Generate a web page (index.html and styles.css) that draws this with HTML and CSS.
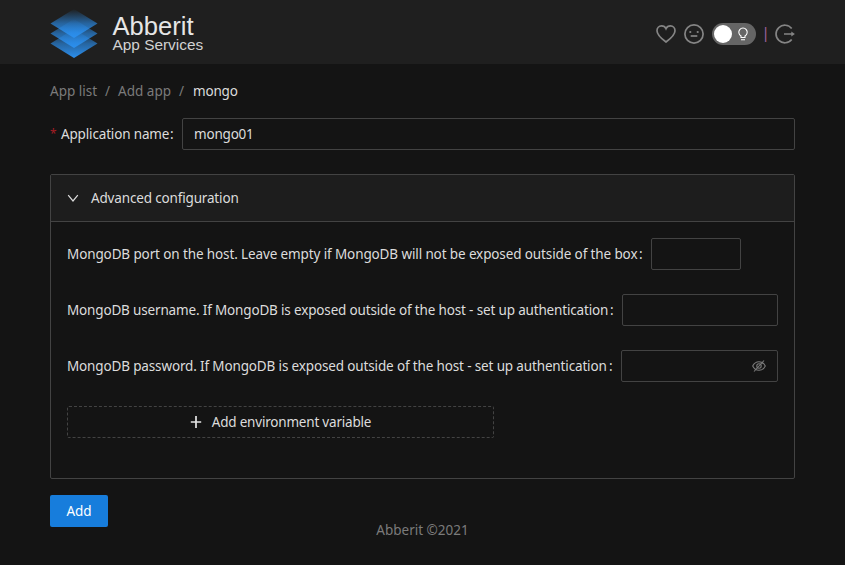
FILE: index.html
```html
<!DOCTYPE html>
<html lang="en">
<head>
<meta charset="utf-8">
<title>Abberit App Services</title>
<link rel="stylesheet" href="styles.css">
</head>
<body>
<header class="header">
  <div class="brand">
    <svg class="logo" width="48" height="50" viewBox="0 0 48 50">
      <defs>
        <linearGradient id="face" x1="0" y1="0" x2="0" y2="1">
          <stop offset="0" stop-color="#2b8fee" stop-opacity="0"/>
          <stop offset=".5" stop-color="#2b8fee" stop-opacity=".62"/>
          <stop offset="1" stop-color="#2b8fee"/>
        </linearGradient>
      </defs>
      <path d="M24 20L47.500 34.500L24 49L.5 34.500Z" fill="url(#face)"/>
      <path d="M24 10L47.500 24.500L24 39L.5 24.500Z" fill="url(#face)"/>
      <path d="M24 0L47.500 14.500L24 29L.5 14.500Z" fill="url(#face)"/>
    </svg>
    <div class="brand-text">
      <div class="brand-name">Abberit</div>
      <div class="brand-sub">App Services</div>
    </div>
  </div>
  <div class="actions">
    <svg class="icon" width="20" height="20" viewBox="0 0 20 20"><path d="M10 18C5 14.300 1 11 1 6.700C1 4 3 1.900 5.500 1.900C7.500 1.900 9.200 3 10 4.700C10.800 3 12.500 1.900 14.500 1.900C17 1.900 19 4 19 6.700C19 11 15 14.300 10 18Z"/></svg>
    <svg class="icon" width="20" height="20" viewBox="0 0 20 20"><circle cx="10" cy="10" r="9.100"/><path d="M6.700 12h6.600"/><circle class="dot" cx="6.300" cy="8" r="1.100"/><circle class="dot" cx="13.700" cy="8" r="1.100"/></svg>
    <div class="switch">
      <span class="knob"></span>
      <svg class="bulb" width="12" height="14" viewBox="0 0 12 14"><path d="M4 10.500V8.900A4.200 4.200 0 1 1 8 8.900V10.500ZM4 12.800h4"/></svg>
    </div>
    <span class="divider">|</span>
    <svg class="icon" width="20" height="20" viewBox="0 0 20 20"><path d="M16.700 4.500A8.800 8.800 0 1 0 16.700 15.500M9 10h8"/><path class="dot" d="M16.300 7.500L19.900 10L16.300 12.500Z"/></svg>
  </div>
</header>
<main class="main">
  <nav class="breadcrumb"><span>App list</span><span class="sep">/</span><span>Add app</span><span class="sep">/</span><span class="current">mongo</span></nav>
  <div class="row name-row">
    <span class="required">*</span>
    <label class="label-name">Application name</label><span class="colon">:</span>
    <div class="input name-input">mongo01</div>
  </div>
  <section class="panel">
    <div class="panel-header">
      <svg class="chevron" width="12" height="12" viewBox="0 0 12 12"><path d="M1.200 3.200L6 9L10.800 3.200"/></svg>
      <span class="panel-title">Advanced configuration</span>
    </div>
    <div class="panel-body">
      <div class="row"><label class="label-port">MongoDB port on the host. Leave empty if MongoDB will not be exposed outside of the box</label><span class="colon">:</span><div class="input port-input"></div></div>
      <div class="row"><label class="label-user">MongoDB username. If MongoDB is exposed outside of the host - set up authentication</label><span class="colon">:</span><div class="input"></div></div>
      <div class="row"><label class="label-pass">MongoDB password. If MongoDB is exposed outside of the host - set up authentication</label><span class="colon">:</span><div class="input pass-input">
        <svg class="eye" width="14" height="14" viewBox="0 0 14 14"><path d="M.7 7C2.100 4.100 4.200 2.700 7 2.700S11.900 4.100 13.300 7C11.900 9.900 9.800 11.300 7 11.300S2.100 9.900.7 7ZM2 12.500L12 1.500"/><circle cx="7" cy="7" r="2.200"/></svg>
      </div></div>
      <button class="dashed"><svg class="plus" width="12" height="12" viewBox="0 0 12 12"><path d="M6 0v12M.8 6h10.400"/></svg><span>Add environment variable</span></button>
    </div>
  </section>
  <button class="primary">Add</button>
</main>
<footer class="footer">Abberit ©2021</footer>
</body>
</html>
```
FILE: styles.css
```css
* { box-sizing: border-box; }
body {
  margin: 0;
  height: 565px;
  overflow: hidden;
  background: #141414;
  color: #dcdcdc;
  font: 13.5px/22px "Noto Sans", "Open Sans", sans-serif;
}
.header {
  height: 64px;
  padding: 0 50px;
  background: #1f1f1f;
  display: flex;
  justify-content: space-between;
  align-items: center;
}
.brand { display: flex; align-items: center; gap: 14.5px; }
.logo { display: block; margin-top: 4px; }
.brand-text { font-family: "Liberation Sans", Arial, sans-serif; padding-top: 2px; }
.brand-name { font-size: 25.6px; line-height: 24px; color: #e6e6e6; }
.brand-sub { font-size: 15.4px; line-height: 14px; color: #d2d2d2; }
.actions { display: flex; align-items: center; padding-top: 4px; }
.icon { display: block; fill: none; stroke: #858585; stroke-width: 1.7; margin-right: 8px; }
.icon .dot { fill: #858585; stroke: none; }
.icon:last-child { margin-right: 0; }
.switch { width: 44px; height: 22px; border-radius: 11px; background: #656565; display: flex; align-items: center; padding: 0 7px 0 2px; justify-content: space-between; }
.knob { width: 18px; height: 18px; border-radius: 50%; background: #fff; }
.bulb { fill: none; stroke: #fff; stroke-width: 1.1; }
.divider { color: #a667a6; width: 19px; text-align: center; font-size: 14px; line-height: 18px; padding-bottom: 2px; }
.main { padding: 16px 50px 0; }
.breadcrumb { display: flex; color: #7b7b7b; }
.sep { margin: 0 8px; }
.current { color: #dcdcdc; margin-left: 1px; letter-spacing: -.2px; }
.row { display: flex; align-items: center; height: 32px; white-space: nowrap; }
.name-row { margin: 16px 0 24px; }
.required { color: #a61d24; width: 11px; font-size: 12px; }
.colon { margin: 0 8px 0 2px; width: 4px; }
.label-name { width: 107px; letter-spacing: -.16px; }
.label-port { width: 570px; letter-spacing: -.118px; }
.label-user { width: 541px; letter-spacing: -.162px; }
.label-pass { width: 540px; letter-spacing: -.145px; }
.input { flex: 1; height: 32px; border: 1px solid #434343; border-radius: 2px; padding: 4px 11px; }
.name-input { letter-spacing: -.2px; }
.port-input { flex: none; width: 90px; }
.pass-input { display: flex; justify-content: flex-end; align-items: center; }
.eye { fill: none; stroke: #7b7b7b; stroke-width: 1.1; }
.panel { height: 305px; border: 1px solid #434343; border-radius: 2px; }
.panel-header { height: 47px; padding: 0 16px; display: flex; align-items: center; background: #1d1d1d; border-bottom: 1px solid #434343; }
.panel-title { letter-spacing: -.16px; }
.chevron { fill: none; stroke: #dcdcdc; stroke-width: 1.2; margin-right: 12px; }
.panel-body { padding: 16px; display: flex; flex-direction: column; gap: 24px; }
button { font: inherit; color: #dcdcdc; display: flex; align-items: center; justify-content: center; height: 32px; border-radius: 2px; padding: 0; }
.dashed { width: 427px; gap: 10px; background: none; border: 1px dashed #434343; letter-spacing: -.2px; }
.plus { fill: none; stroke: #e4e4e4; stroke-width: 1.7; }
.primary { width: 58px; margin-top: 16px; background: #177ddc; border: 0; color: #fff; }
.footer { text-align: center; color: #7b7b7b; margin-top: -8px; }
```
